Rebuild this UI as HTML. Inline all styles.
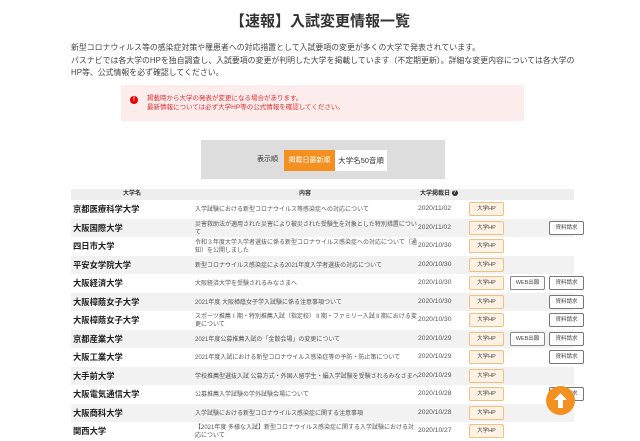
<!DOCTYPE html>
<html><head><meta charset="utf-8"><style>
*{margin:0;padding:0;box-sizing:border-box}
body{width:640px;height:437px;overflow:hidden;background:#fff;font-family:"Liberation Sans","Noto Sans CJK JP",sans-serif;color:#333;position:relative}
.a{position:absolute}
h1{position:absolute;top:10px;left:0;width:640px;text-align:center;font-size:15px;font-weight:bold;color:#333}
.p{left:71px;font-size:7.9px;line-height:12.5px;color:#444;top:42px;white-space:nowrap}
.alert{left:121px;top:85px;width:403px;height:36px;background:#fdecec}
.alert .t{position:absolute;left:26px;top:9px;font-size:6.5px;line-height:9px;color:#e03030}
.alert .i{position:absolute;left:9px;top:11px;width:8px;height:8px;border-radius:50%;background:#e00;color:#fff;font-size:6px;text-align:center;line-height:8px;font-weight:bold}
.sort{left:201px;top:140px;width:244px;height:39px;background:#ddd}
.sort .l{position:absolute;left:56px;top:14px;font-size:7px;color:#333}
.sort .b1{position:absolute;left:83px;top:10px;width:51px;height:21px;background:#f39020;color:#fff;font-size:7px;text-align:center;line-height:21px}
.sort .b2{position:absolute;left:134px;top:10px;width:52px;height:21px;background:#fff;color:#333;font-size:7.5px;text-align:center;line-height:21px}
.hd{left:71px;top:189px;width:503px;height:11px;background:#eee;font-size:6px;font-weight:bold;line-height:11px}
.q{display:inline-block;width:6px;height:6px;border-radius:50%;background:#333;color:#fff;font-size:5px;line-height:6px;text-align:center;vertical-align:middle}
.row{position:absolute;left:71px;width:503px;height:18.5px}
.row.g{background:#f2f2f2}
.n{position:absolute;left:2px;top:3px;font-size:8.3px;font-weight:bold;color:#222}
.c{position:absolute;left:124px;width:222px;font-size:6px;line-height:8px;color:#555}
.d{position:absolute;left:347px;top:5px;font-size:6.7px;color:#555}
.hp{position:absolute;left:398px;top:2px;width:35px;height:14px;border:1px solid #f0c080;background:#fdf2e4;border-radius:2px;font-size:5.5px;text-align:center;line-height:12px;color:#444}
.w{position:absolute;left:439px;top:2px;width:35px;height:14px;border:1px solid #888;background:#fff;border-radius:2px;font-size:5.5px;text-align:center;line-height:12px;color:#444}
.r{position:absolute;left:478px;top:2px;width:35px;height:14px;border:1px solid #777;background:#fff;border-radius:2px;font-size:5.5px;text-align:center;line-height:12px;color:#444}
.up{left:546px;top:386px;width:29px;height:29px;border-radius:50%;background:#f39020}
</style></head><body>
<h1>【速報】入試変更情報一覧</h1>
<div class="a p">新型コロナウィルス等の感染症対策や罹患者への対応措置として入試要項の変更が多くの大学で発表されています。<br>パスナビでは各大学のHPを独自調査し、入試要項の変更が判明した大学を掲載しています（不定期更新）。詳細な変更内容については各大学の<br>HP等、公式情報を必ず確認してください。</div>
<div class="a alert"><div class="i">!</div><div class="t">掲載時から大学の発表が変更になる場合があります。<br>最新情報については必ず大学HP等の公式情報を確認してください。</div></div>
<div class="a sort"><div class="l">表示順</div><div class="b1">掲載日最新順</div><div class="b2">大学名50音順</div></div>
<div class="a hd"><span class="a" style="left:52px">大学名</span><span class="a" style="left:228px">内容</span><span class="a" style="left:349px">大学掲載日 <span class="q">?</span></span></div>

<div class="row" style="top:200px"><div class="n">京都医療科学大学</div><div class="c" style="top:6px">入学試験における新型コロナウイルス等感染症への対応について</div><div class="d">2020/11/02</div><div class="hp">大学HP</div></div>
<div class="row g" style="top:218.5px"><div class="n">大阪国際大学</div><div class="c" style="top:2px">災害救助法が適用された災害により被災された受験生を対象とした特別措置につい<br>て</div><div class="d">2020/11/02</div><div class="hp">大学HP</div><div class="r">資料請求</div></div>
<div class="row" style="top:237px"><div class="n">四日市大学</div><div class="c" style="top:2px">令和３年度大学入学者選抜に係る新型コロナウイルス感染症への対応について（通<br>知）を公開しました</div><div class="d">2020/10/30</div><div class="hp">大学HP</div></div>
<div class="row g" style="top:255.5px"><div class="n">平安女学院大学</div><div class="c" style="top:6px">新型コロナウイルス感染症による2021年度入学者選抜の対応について</div><div class="d">2020/10/30</div><div class="hp">大学HP</div></div>
<div class="row" style="top:274px"><div class="n">大阪経済大学</div><div class="c" style="top:6px">大阪経済大学を受験されるみなさまへ</div><div class="d">2020/10/30</div><div class="hp">大学HP</div><div class="w">WEB出願</div><div class="r">資料請求</div></div>
<div class="row g" style="top:292.5px"><div class="n">大阪樟蔭女子大学</div><div class="c" style="top:6px">2021年度 大阪樟蔭女子学入試験に係る注意事項ついて</div><div class="d">2020/10/30</div><div class="hp">大学HP</div><div class="r">資料請求</div></div>
<div class="row" style="top:311px"><div class="n">大阪樟蔭女子大学</div><div class="c" style="top:2px">スポーツ推薦Ⅰ期・特別推薦入試（指定校）Ⅱ期・ファミリー入試Ⅱ期における変<br>更について</div><div class="d">2020/10/30</div><div class="hp">大学HP</div><div class="r">資料請求</div></div>
<div class="row g" style="top:329.5px"><div class="n">京都産業大学</div><div class="c" style="top:6px">2021年度公募推薦入試の「金散会場」の変更について</div><div class="d">2020/10/29</div><div class="hp">大学HP</div><div class="w">WEB出願</div><div class="r">資料請求</div></div>
<div class="row" style="top:348px"><div class="n">大阪工業大学</div><div class="c" style="top:6px">2021年度入試における新型コロナウイルス感染症等の予防・防止策について</div><div class="d">2020/10/29</div><div class="hp">大学HP</div><div class="r">資料請求</div></div>
<div class="row g" style="top:366.5px"><div class="n">大手前大学</div><div class="c" style="top:6px;white-space:nowrap">学校推薦型選抜入試 公募方式・外国人留学生・編入学試験を受験されるみなさまへ</div><div class="d">2020/10/29</div><div class="hp">大学HP</div></div>
<div class="row" style="top:385px"><div class="n">大阪電気通信大学</div><div class="c" style="top:6px">公募推薦入学試験の学外試験会場について</div><div class="d">2020/10/28</div><div class="hp">大学HP</div><div class="r">資料請求</div></div>
<div class="row g" style="top:403.5px"><div class="n">大阪商科大学</div><div class="c" style="top:6px">入学試験における新型コロナウイルス感染症に関する注意事項</div><div class="d">2020/10/28</div><div class="hp">大学HP</div></div>
<div class="row" style="top:422px"><div class="n">関西大学</div><div class="c" style="top:2px">【2021年度 多様な入試】新型コロナウイルス感染症に関する入学試験における対<br>応について</div><div class="d">2020/10/27</div><div class="hp">大学HP</div></div>

<div class="a up"><svg width="29" height="29" viewBox="0 0 29 29"><path d="M14.5 7 L8 14 H12 V22 H17 V14 H21 Z" fill="#fff"/></svg></div>
</body></html>
